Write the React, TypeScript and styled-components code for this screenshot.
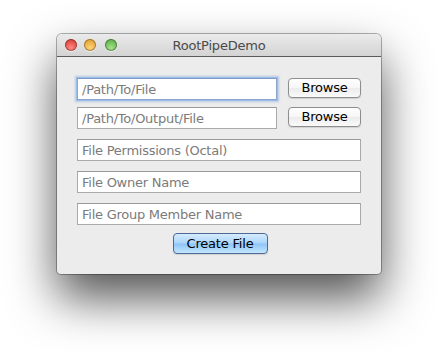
import React from "react";
import styled, { createGlobalStyle } from "styled-components";

const Global = createGlobalStyle`
  html, body { margin: 0; padding: 0; background: #ffffff; }
  body { font-family: "DejaVu Sans", "Liberation Sans", sans-serif; }
  * { box-sizing: border-box; }
`;

const Page = styled.div`
  width: 438px;
  height: 353px;
  padding: 34px 0 0 57px;
  overflow: hidden;
`;

const Window = styled.div`
  width: 324px;
  height: 240px;
  background: #ececec;
  border-radius: 5px 5px 4px 4px;
  box-shadow: 0 0 0 1px rgba(0, 0, 0, 0.3), 0 24px 48px rgba(0, 0, 0, 0.68);
  display: flex;
  flex-direction: column;
  overflow: hidden;
`;

const TitleBar = styled.div`
  height: 23px;
  flex: none;
  background: linear-gradient(#ebebeb, #d3d3d3);
  border-bottom: 1px solid #5c5c5c;
  display: flex;
  align-items: center;
  position: relative;
  padding-left: 8px;
  gap: 7px;
`;

const Light = styled.div<{ $c: string; $d: string; $ml?: number }>`
  width: 12px;
  height: 12px;
  border-radius: 50%;
  background: radial-gradient(circle at 50% 75%, ${(p) => p.$c} 0%, ${(p) => p.$d} 95%);
  box-shadow: inset 0 0 0 1px rgba(0, 0, 0, 0.3), 0 1px 0 rgba(255, 255, 255, 0.6);
  margin-left: ${(p) => p.$ml ?? 0}px;
`;

const Title = styled.div`
  position: absolute;
  inset: 0;
  display: flex;
  align-items: center;
  justify-content: center;
  font-size: 13px;
  color: #4a4a4a;
  letter-spacing: -0.2px;
  pointer-events: none;
`;

const Content = styled.div`
  padding: 21px 20px 0 20px;
  display: flex;
  flex-direction: column;
`;

const Row = styled.div<{ $mt: number }>`
  display: flex;
  align-items: flex-start;
  gap: 11px;
  margin-top: ${(p) => p.$mt}px;
`;

const Field = styled.input<{ $w?: number; $focus?: boolean }>`
  width: ${(p) => (p.$w ? `${p.$w}px` : "100%")};
  height: 22px;
  border: 1px solid ${(p) => (p.$focus ? "#8aa5cf" : "#aaaaaa")};
  border-top-color: ${(p) => (p.$focus ? "#7d9bcc" : "#9a9a9a")};
  background: #fff;
  font-family: "DejaVu Sans", "Liberation Sans", sans-serif;
  font-size: 13px;
  letter-spacing: -0.25px;
  padding: 1px 0 0 4px;
  outline: none;
  box-shadow: ${(p) => (p.$focus ? "0 0 0 1px #9cbde6, 0 0 2px 2px rgba(120,160,220,0.45)" : "none")};
  &::placeholder { color: #7b7b7b; }
`;

const Button = styled.button<{ $w: number; $default?: boolean }>`
  width: ${(p) => p.$w}px;
  height: ${(p) => (p.$default ? 21 : 20)}px;
  border-radius: 4px;
  border: 1px solid ${(p) => (p.$default ? "#4d6b96" : "#8d8d8d")};
  background: ${(p) =>
    p.$default
      ? "linear-gradient(#d6ecfd 0%, #aad5fb 48%, #8ec5f8 52%, #c3e6fe 100%)"
      : "linear-gradient(#ffffff 0%, #f6f6f6 50%, #ececec 52%, #fafafa 100%)"};
  font-family: "DejaVu Sans", "Liberation Sans", sans-serif;
  font-size: 13px;
  letter-spacing: -0.2px;
  color: #000;
  padding: 0;
  line-height: 18px;
  box-shadow: 0 1px 1px rgba(0, 0, 0, 0.12);
  flex: none;
`;

const Center = styled.div`
  display: flex;
  justify-content: center;
  margin-top: 8px;
  padding-left: 2px;
`;

export default function App() {
  return (
    <>
      <Global />
      <Page>
        <Window>
          <TitleBar>
            <Light $c="#ff8a85" $d="#d4312b" />
            <Light $c="#ffd27a" $d="#dc9a22" />
            <Light $c="#a6e28c" $d="#4ea63a" $ml={2} />
            <Title>RootPipeDemo</Title>
          </TitleBar>
          <Content>
            <Row $mt={0}>
              <Field $w={200} $focus placeholder="/Path/To/File" />
              <Button $w={73}>Browse</Button>
            </Row>
            <Row $mt={7}>
              <Field $w={200} placeholder="/Path/To/Output/File" />
              <Button $w={73}>Browse</Button>
            </Row>
            <Row $mt={10}>
              <Field placeholder="File Permissions (Octal)" />
            </Row>
            <Row $mt={10}>
              <Field placeholder="File Owner Name" />
            </Row>
            <Row $mt={10}>
              <Field placeholder="File Group Member Name" />
            </Row>
            <Center>
              <Button $w={95} $default>
                Create File
              </Button>
            </Center>
          </Content>
        </Window>
      </Page>
    </>
  );
}
